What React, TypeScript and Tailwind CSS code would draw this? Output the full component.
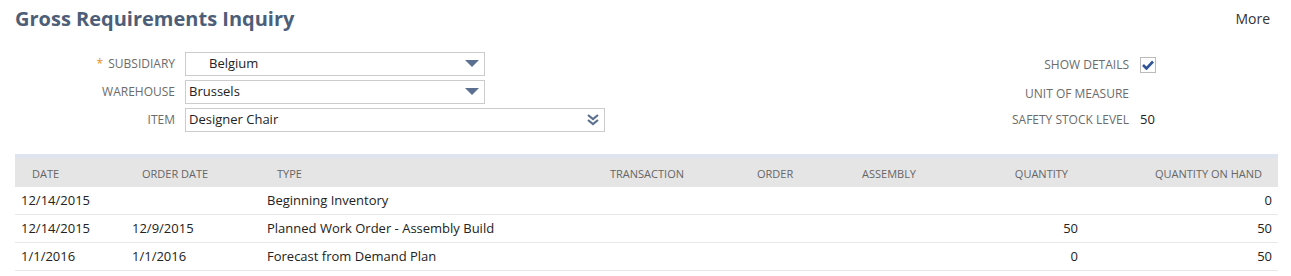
const Arrow = () => (
  <svg width="14" height="8" viewBox="0 0 14 8" className="shrink-0">
    <path d="M0 0 H14 L7 7 Z" fill="#5b7091" />
  </svg>
);

const DoubleArrow = () => (
  <svg width="12" height="12" viewBox="0 0 12 12" className="shrink-0">
    <path d="M1 1 L6 5 L11 1" stroke="#5b7091" strokeWidth="2.2" fill="none" />
    <path d="M1 6 L6 10 L11 6" stroke="#5b7091" strokeWidth="2.2" fill="none" />
  </svg>
);

const Select = ({
  value,
  width,
  indent,
  double,
}: {
  value: string;
  width: string;
  indent?: boolean;
  double?: boolean;
}) => (
  <div
    className={`flex h-[24px] items-center justify-between border border-[#cccccc] bg-white pr-[5px] ${width} ${
      indent ? "pl-[23px]" : "pl-[3px]"
    }`}
  >
    <span className="text-[13px] text-[#222]">{value}</span>
    {double ? <DoubleArrow /> : <Arrow />}
  </div>
);

const cols =
  "grid grid-cols-[111px_135px_343px_147px_105px_104px_124px_194px]";

const rows = [
  ["12/14/2015", "", "Beginning Inventory", "", "", "", "", "0"],
  ["12/14/2015", "12/9/2015", "Planned Work Order - Assembly Build", "", "", "", "50", "50"],
  ["1/1/2016", "1/1/2016", "Forecast from Demand Plan", "", "", "", "0", "50"],
];

export default function App() {
  return (
    <div
      className="h-[276px] w-[1291px] bg-white"
      style={{ fontFamily: '"Open Sans", sans-serif' }}
    >
      <div className="flex items-start justify-between pl-[15px] pr-[21px] pt-[4px]">
        <h1 className="text-[20px] font-bold leading-[30px] text-[#4d5e78]">
          Gross Requirements Inquiry
        </h1>
        <span className="pt-[3px] text-[14px] leading-[24px] text-[#333]">More</span>
      </div>

      <div className="mt-[18px] flex">
        <div className="flex flex-col gap-[4px]">
          <div className="flex items-center">
            <div className="w-[176px] pr-[1px] text-right text-[12px] uppercase text-[#6b6b6b]">
              <span className="mr-[5px] text-[#e5901a]">*</span>Subsidiary
            </div>
            <div className="ml-[9px]">
              <Select value="Belgium" width="w-[300px]" indent />
            </div>
          </div>
          <div className="flex items-center">
            <div className="w-[176px] pr-[1px] text-right text-[12px] uppercase text-[#6b6b6b]">
              Warehouse
            </div>
            <div className="ml-[9px]">
              <Select value="Brussels" width="w-[300px]" />
            </div>
          </div>
          <div className="flex items-center">
            <div className="w-[176px] pr-[1px] text-right text-[12px] uppercase text-[#6b6b6b]">
              Item
            </div>
            <div className="ml-[9px]">
              <Select value="Designer Chair" width="w-[420px]" double />
            </div>
          </div>
        </div>

        <div className="ml-auto mr-[135px] flex flex-col pt-[5px]">
          <div className="flex h-[16px] items-center">
            <div className="w-[390px] pr-[1px] text-right text-[12px] uppercase text-[#6b6b6b]">
              Show Details
            </div>
            <div className="ml-[10px] flex h-[16px] w-[16px] items-center justify-center border border-[#bbbbbb] bg-white">
              <svg width="12" height="10" viewBox="0 0 12 10">
                <path d="M1 5 L4.5 8.5 L11 1.5" stroke="#2f5597" strokeWidth="2.6" fill="none" />
              </svg>
            </div>
          </div>
          <div className="mt-[13px] flex h-[16px] items-center">
            <div className="w-[390px] pr-[1px] text-right text-[12px] uppercase text-[#6b6b6b]">
              Unit of Measure
            </div>
          </div>
          <div className="mt-[10px] flex h-[16px] items-center">
            <div className="w-[390px] pr-[1px] text-right text-[12px] uppercase text-[#6b6b6b]">
              Safety Stock Level
            </div>
            <div className="ml-[10px] text-[13px] text-[#222]">50</div>
          </div>
        </div>
      </div>

      <div className="ml-[15px] mt-[22px] w-[1263px]">
        <div className="h-[4px] bg-[#dfe5ee]" />
        <div className={`${cols} h-[29px] items-center bg-[#e5e5e5] pt-[4px] text-[11px] uppercase text-[#666]`}>
          <div className="pl-[17px]">Date</div>
          <div className="pl-[16px]">Order Date</div>
          <div className="pl-[16px]">Type</div>
          <div className="pl-[6px]">Transaction</div>
          <div className="pl-[6px]">Order</div>
          <div className="pl-[6px]">Assembly</div>
          <div className="pr-[16px] text-right">Quantity</div>
          <div className="pr-[16px] text-right">Quantity on Hand</div>
        </div>
        {rows.map((r, i) => (
          <div
            key={i}
            className={`${cols} h-[28px] items-center border-b border-[#e8e8e8] text-[13px] text-[#222]`}
          >
            <div className="pl-[6px]">{r[0]}</div>
            <div className="pl-[6px]">{r[1]}</div>
            <div className="pl-[6px]">{r[2]}</div>
            <div className="pl-[6px]">{r[3]}</div>
            <div className="pl-[6px]">{r[4]}</div>
            <div className="pl-[6px]">{r[5]}</div>
            <div className="pr-[6px] text-right">{r[6]}</div>
            <div className="pr-[6px] text-right">{r[7]}</div>
          </div>
        ))}
      </div>
    </div>
  );
}
